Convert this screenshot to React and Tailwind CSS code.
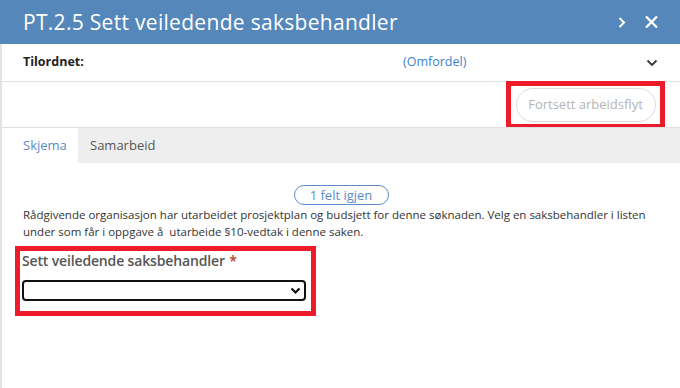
import React from "react";

export default function App() {
  return (
    <div className="w-[680px] h-[388px] bg-white overflow-hidden" style={{ fontFamily: '"Open Sans", sans-serif' }}>
      <div className="h-[44px] bg-[#5587bb] flex items-center pl-[23px] pr-[22px]">
        <div className="text-white text-[21px] leading-none flex-1 tracking-[0.3px]">PT.2.5 Sett veiledende saksbehandler</div>
        <svg width="8" height="11" viewBox="0 0 8 11" className="mr-[19px]"><path d="M1.5 1 L6 5.5 L1.5 10" fill="none" stroke="white" strokeWidth="2" /></svg>
        <svg width="13" height="12" viewBox="0 0 13 12"><path d="M1 0.5 L12 11.5 M12 0.5 L1 11.5" fill="none" stroke="white" strokeWidth="2.3" /></svg>
      </div>
      <div className="border-l-2 border-[#e2e2e2] h-[344px] flex flex-col">
        <div className="h-[38px] border-b border-[#e2e2e2] flex items-center pl-[21px] pr-[22px]">
          <div className="font-bold text-[12.5px] text-[#222] w-[380px]">Tilordnet:</div>
          <div className="text-[12.5px] text-[#3c82cc] flex-1">(Omfordel)</div>
          <svg width="12" height="8" viewBox="0 0 12 8"><path d="M1.5 1.5 L6 6 L10.5 1.5" fill="none" stroke="#3b3530" strokeWidth="1.8" /></svg>
        </div>
        <div className="h-[45px] flex justify-end items-center pr-[15px]">
          <div className="border-[5px] border-[#ec1c2a] w-[159px] h-[48px] flex items-center justify-center">
            <div className="border border-[#dcdcdc] rounded-full w-[140px] h-[34px] flex items-center justify-center text-[13px] text-[#b4b4b4]">Fortsett arbeidsflyt</div>
          </div>
        </div>
        <div className="h-[36px] bg-[#eeeeee] border-t border-[#e0e0e0] flex">
          <div className="bg-white w-[76px] flex items-center pl-[21px] text-[13px] text-[#5b8bc9]">Skjema</div>
          <div className="flex items-center pl-[12px] text-[13px] text-[#555]">Samarbeid</div>
        </div>
        <div className="flex flex-col">
          <div className="flex justify-center pt-[22px]">
            <div className="border border-[#5b8bc9] rounded-full w-[95px] h-[20px] flex items-center justify-center text-[13px] text-[#5b8bc9] leading-none">1 felt igjen</div>
          </div>
          <div className="pl-[21px] pr-[16px] text-[11.5px] leading-[17px] text-[#333] mt-[1px]">
            Rådgivende organisasjon har utarbeidet prosjektplan og budsjett for denne søknaden. Velg en saksbehandler i listen under som får i oppgave å&nbsp; utarbeide §10-vedtak i denne saken.
          </div>
          <div className="ml-[13px] mt-[6px] w-[301px] h-[70px] border-[5px] border-[#ec1c2a] pl-[2px]">
            <div className="text-[14px] leading-[20px] text-[#555] font-semibold tracking-[-0.15px]">Sett veiledende saksbehandler <span className="text-[#b6401c] ml-[1px]">*</span></div>
            <div className="mt-[9px] w-[284px] h-[21px] border-2 border-[#111] rounded-[4px] flex items-center justify-end pr-[3px]">
              <svg width="11" height="8" viewBox="0 0 11 8"><path d="M1.5 1.5 L5.5 5.5 L9.5 1.5" fill="none" stroke="#111" strokeWidth="2.2" /></svg>
            </div>
          </div>
        </div>
      </div>
    </div>
  );
}
